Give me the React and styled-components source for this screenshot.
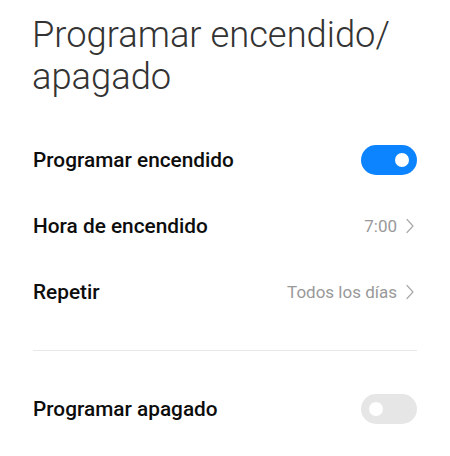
import React from "react";
import styled, { createGlobalStyle } from "styled-components";

const Global = createGlobalStyle`
  html, body { margin: 0; padding: 0; background: #ffffff; }
  body { font-family: Roboto, "Noto Sans", Arial, sans-serif; -webkit-font-smoothing: antialiased; }
`;

const Page = styled.div`
  width: 450px;
  height: 456px;
  box-sizing: border-box;
  padding: 14px 33px 0 33px;
  background: #fff;
  overflow: hidden;
`;

const Title = styled.h1`
  margin: 0 0 29px -1px;
  font-family: Roboto, sans-serif;
  font-weight: 300;
  font-size: 36.3px;
  line-height: 42px;
  color: #333333;
  letter-spacing: 0;
`;

const Row = styled.div`
  display: flex;
  align-items: center;
  justify-content: space-between;
  height: 66px;
`;

const Label = styled.span`
  font-family: Roboto, sans-serif;
  font-weight: 500;
  font-size: 20.8px;
  color: #0d0d0d;
`;

const Value = styled.span`
  display: flex;
  align-items: center;
  gap: 9px;
  font-family: Roboto, sans-serif;
  font-weight: 400;
  font-size: 17px;
  color: #999999;
`;

const Chevron = () => (
  <svg width="8" height="16" viewBox="0 0 8 16" style={{ marginRight: 3 }}>
    <path d="M1 1.5 L7 8 L1 14.5" fill="none" stroke="#aaaaaa" strokeWidth="1.2" strokeLinecap="round" strokeLinejoin="round" />
  </svg>
);

const Track = styled.div`
  position: relative;
  width: 56px;
  height: 30px;
  border-radius: 15px;
  background: ${(p) => (p.$on ? "#0d84ff" : "#e6e6e6")};
  flex-shrink: 0;
`;

const Knob = styled.div`
  position: absolute;
  top: 8px;
  ${(p) => (p.$on ? "right: 8px;" : "left: 8px;")}
  width: 14px;
  height: 14px;
  border-radius: 50%;
  background: #ffffff;
`;

const Toggle = ({ on }) => (
  <Track $on={on}>
    <Knob $on={on} />
  </Track>
);

const Divider = styled.div`
  height: 1px;
  background: #e8e8e8;
  margin: 25px 0 25px 0;
`;

export default function App() {
  return (
    <>
      <Global />
      <Page>
        <Title>
          Programar encendido/
          <br />
          apagado
        </Title>
        <Row>
          <Label>Programar encendido</Label>
          <Toggle on />
        </Row>
        <Row>
          <Label>Hora de encendido</Label>
          <Value>
            7:00
            <Chevron />
          </Value>
        </Row>
        <Row>
          <Label>Repetir</Label>
          <Value>
            Todos los días
            <Chevron />
          </Value>
        </Row>
        <Divider />
        <Row>
          <Label>Programar apagado</Label>
          <Toggle />
        </Row>
      </Page>
    </>
  );
}
